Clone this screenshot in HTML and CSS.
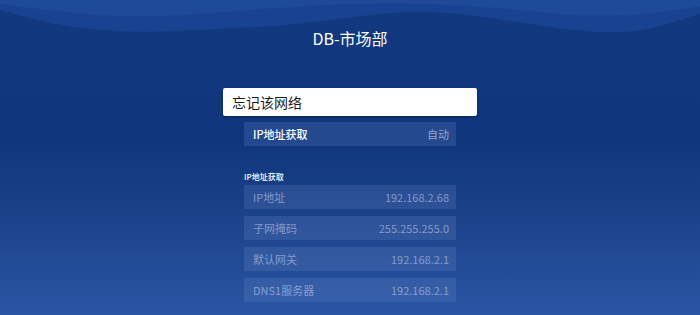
FILE: index.html
```html
<!DOCTYPE html>
<html lang="zh">
<head>
<meta charset="utf-8">
<link rel="stylesheet" href="styles.css">
</head>
<body>
<div class="screen">
  <svg class="waves" width="700" height="60" viewBox="0 0 700 60" preserveAspectRatio="none">
    <path d="M0 0 H700 V14 C660 26 640 34 600 32 C540 29 480 12 420 12 C370 12 330 22 270 26 C200 30 150 34 100 30 C60 27 30 18 0 10 Z" fill="#1b4593" opacity="0.9"/>
    <path d="M0 0 H700 V6 C650 16 600 18 540 12 C480 6 430 2 350 4 C280 6 220 14 160 16 C100 18 50 10 0 4 Z" fill="#224d9d" opacity="0.7"/>
  </svg>
  <h1 class="title">DB-市场部</h1>
  <div class="menu">
    <div class="focus">忘记该网络</div>
    <div class="list">
      <div class="row row-main"><span class="k">IP地址获取</span><span class="v">自动</span></div>
      <div class="section">IP地址获取</div>
      <div class="row"><span class="k">IP地址</span><span class="v">192.168.2.68</span></div>
      <div class="row"><span class="k">子网掩码</span><span class="v">255.255.255.0</span></div>
      <div class="row"><span class="k">默认网关</span><span class="v">192.168.2.1</span></div>
      <div class="row"><span class="k">DNS1服务器</span><span class="v">192.168.2.1</span></div>
    </div>
  </div>
</div>
</body>
</html>
```
FILE: styles.css
```css
html, body {
  margin: 0;
  padding: 0;
}
body {
  width: 700px;
  height: 315px;
  overflow: hidden;
  font-family: "Noto Sans CJK SC", "Noto Sans", sans-serif;
}
.screen {
  position: relative;
  width: 700px;
  height: 315px;
  background: linear-gradient(180deg, #12387f 0%, #10367e 45%, #1a4088 65%, #2a55a3 100%);
  display: flex;
  flex-direction: column;
  align-items: center;
}
.waves {
  position: absolute;
  left: 0;
  top: 0;
}
.title {
  position: relative;
  margin: 26px 0 0;
  height: 24px;
  font-size: 16px;
  line-height: 24px;
  font-weight: 400;
  color: #ffffff;
}
.menu {
  margin-top: 38px;
  width: 254px;
  display: flex;
  flex-direction: column;
  align-items: center;
}
.focus {
  box-sizing: border-box;
  width: 254px;
  height: 28px;
  background: #ffffff;
  border-radius: 2px;
  padding-left: 9px;
  font-size: 14px;
  line-height: 28px;
  color: #1a1a1a;
  box-shadow: 0 1px 3px rgba(0,0,0,0.4);
}
.list {
  width: 212px;
  display: flex;
  flex-direction: column;
  gap: 7px;
  margin-top: 6px;
}
.row {
  box-sizing: border-box;
  height: 24px;
  padding: 0 7px 0 9px;
  display: flex;
  justify-content: space-between;
  align-items: center;
  background: rgba(120, 150, 210, 0.2);
  font-size: 11px;
  color: rgba(205, 215, 242, 0.55);
}
.row-main {
  height: 24px;
  color: #ffffff;
}
.row-main .k {
  font-weight: 500;
}
.row-main .v {
  color: rgba(210, 220, 245, 0.65);
}
.section {
  margin-top: 19px;
  margin-bottom: -4px;
  font-size: 8px;
  line-height: 10px;
  color: #ffffff;
  font-weight: 500;
}
```
